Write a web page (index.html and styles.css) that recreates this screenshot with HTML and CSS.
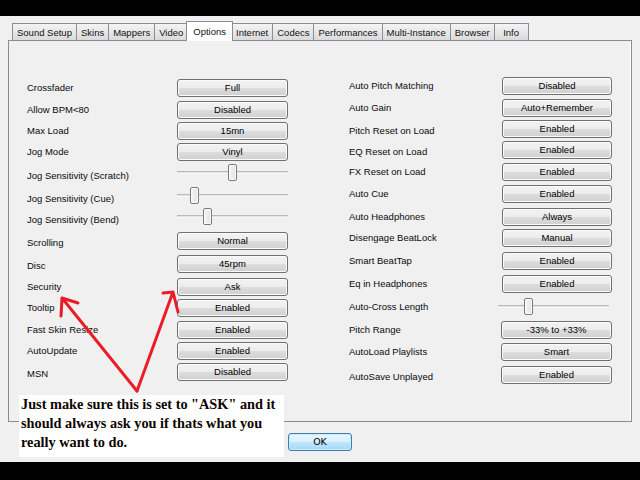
FILE: index.html
```html
<!DOCTYPE html>
<html>
<head>
<meta charset="utf-8">
<link rel="stylesheet" href="styles.css">
</head>
<body>
<div class="window">
  <div class="tabs">
    <div class="tab">Sound Setup</div>
    <div class="tab">Skins</div>
    <div class="tab">Mappers</div>
    <div class="tab">Video</div>
    <div class="tab active">Options</div>
    <div class="tab">Internet</div>
    <div class="tab">Codecs</div>
    <div class="tab">Performances</div>
    <div class="tab">Multi-Instance</div>
    <div class="tab">Browser</div>
    <div class="tab last">Info</div>
  </div>
  <div class="panel">
    <div class="col left">
      <div class="lbl">Crossfader</div><div class="btn">Full</div>
      <div class="lbl">Allow BPM&lt;80</div><div class="btn">Disabled</div>
      <div class="lbl">Max Load</div><div class="btn">15mn</div>
      <div class="lbl">Jog Mode</div><div class="btn">Vinyl</div>
      <div class="lbl slo">Jog Sensitivity (Scratch)</div><div class="slider"><div class="track"></div><div class="thumb" style="left:51px"></div></div>
      <div class="lbl slo">Jog Sensitivity (Cue)</div><div class="slider"><div class="track"></div><div class="thumb" style="left:13px"></div></div>
      <div class="lbl slo">Jog Sensitivity (Bend)</div><div class="slider"><div class="track"></div><div class="thumb" style="left:26px"></div></div>
      <div class="lbl lo">Scrolling</div><div class="btn">Normal</div>
      <div class="lbl lo">Disc</div><div class="btn">45rpm</div>
      <div class="lbl">Security</div><div class="btn">Ask</div>
      <div class="lbl">Tooltip</div><div class="btn">Enabled</div>
      <div class="lbl">Fast Skin Resize</div><div class="btn">Enabled</div>
      <div class="lbl">AutoUpdate</div><div class="btn">Enabled</div>
      <div class="lbl lo">MSN</div><div class="btn">Disabled</div>
    </div>
    <div class="col right">
      <div class="lbl">Auto Pitch Matching</div><div class="btn">Disabled</div>
      <div class="lbl">Auto Gain</div><div class="btn">Auto+Remember</div>
      <div class="lbl lo">Pitch Reset on Load</div><div class="btn">Enabled</div>
      <div class="lbl lo">EQ Reset on Load</div><div class="btn">Enabled</div>
      <div class="lbl">FX Reset on Load</div><div class="btn">Enabled</div>
      <div class="lbl">Auto Cue</div><div class="btn">Enabled</div>
      <div class="lbl">Auto Headphones</div><div class="btn">Always</div>
      <div class="lbl">Disengage BeatLock</div><div class="btn">Manual</div>
      <div class="lbl">Smart BeatTap</div><div class="btn">Enabled</div>
      <div class="lbl">Eq in Headphones</div><div class="btn">Enabled</div>
      <div class="lbl">Auto-Cross Length</div><div class="slider shift"><div class="track"></div><div class="thumb" style="left:26px"></div></div>
      <div class="lbl">Pitch Range</div><div class="btn shift1">-33% to +33%</div>
      <div class="lbl">AutoLoad Playlists</div><div class="btn shift1">Smart</div>
      <div class="lbl lo">AutoSave Unplayed</div><div class="btn shift1">Enabled</div>
    </div>
  </div>
  <div class="footer">
    <div class="okbtn">OK</div>
  </div>
</div>
<div class="note">Just make sure this is set to "ASK" and it<br>should always ask you if thats what you<br>really want to do.</div>
<svg class="arrows" width="640" height="480" viewBox="0 0 640 480">
  <g fill="none" stroke="#ea1c25" stroke-width="3" stroke-linecap="round" stroke-linejoin="round">
    <path d="M137 391 L62 298 M62 298 L78 303 M62 298 L61 316"/>
    <path d="M137 391 L173 292 M173 292 L163 293 M173 292 L178 312"/>
  </g>
</svg>
</body>
</html>
```

FILE: styles.css
```css
html, body {
  margin: 0;
  padding: 0;
}
body {
  width: 640px;
  height: 480px;
  background: #000;
  position: relative;
  overflow: hidden;
  font-family: "Liberation Sans", Arial, sans-serif;
  font-size: 9.5px;
  color: #000;
}
.window {
  margin-top: 16px;
  height: 446px;
  background: #f0f0f0;
}
.tabs {
  display: flex;
  align-items: flex-end;
  height: 24px;
  padding-left: 12px;
  box-sizing: border-box;
}
.tab {
  height: 17px;
  line-height: 18px;
  padding: 0 4px;
  box-sizing: border-box;
  border: 1px solid #8c8e94;
  border-bottom: none;
  margin-left: -1px;
  background: linear-gradient(#f4f4f4, #e6e6e6 55%, #dadada);
  text-align: center;
  white-space: nowrap;
  color: #111;
}
.tab:first-child {
  margin-left: 0;
}
.tab.last {
  min-width: 35px;
}
.tab.active {
  height: 20px;
  line-height: 19px;
  margin-bottom: -1px;
  background: #fff;
  position: relative;
  z-index: 2;
  padding: 0 6px;
  margin-left: -2px;
  margin-right: -1px;
}
.panel {
  margin-left: 8px;
  width: 624px;
  height: 382px;
  box-sizing: border-box;
  border: 1px solid #898c92;
  box-shadow: inset -1px 0 0 #fff;
  background: #f0f0f0;
  display: flex;
  align-items: flex-start;
  gap: 61px;
  padding: 36px 0 0 18px;
}
.col {
  display: grid;
  align-items: start;
}
.col.left {
  margin-top: 2px;
  grid-template-columns: 150px 111px;
  grid-template-rows: 22px 21px 21px 21px 23px 21px 24px 23px 23px 21px 22px 21px 21px 19px;
}
.col.right {
  grid-template-columns: 153px 110px;
  grid-template-rows: 22px 21px 21px 22px 22px 23px 21px 23px 23px 23px 23px 22px 23px 18px;
}
.lbl {
  height: 18px;
  line-height: 18px;
  white-space: nowrap;
  color: #0a0a0a;
}
.lbl.lo {
  padding-top: 2px;
}
.lbl.slo {
  padding-top: 3px;
}
.btn {
  height: 18px;
  box-sizing: border-box;
  border: 1px solid #707070;
  border-radius: 3px;
  background: linear-gradient(#f3f3f3 0%, #ececec 50%, #dddddd 50%, #d0d0d0 100%);
  box-shadow: inset 0 0 0 1px #fbfbfb;
  text-align: center;
  line-height: 16px;
  white-space: nowrap;
}
.btn.shift1 {
  margin-left: -1px;
}
.slider {
  position: relative;
  height: 17px;
  display: flex;
  align-items: center;
}
.slider.shift {
  margin-left: -4px;
  width: 111px;
}
.track {
  flex: 1;
  height: 3px;
  box-sizing: border-box;
  border-top: 1px solid #b9b9b9;
  border-bottom: 1px solid #f8f8f8;
  background: #e3e3e3;
}
.thumb {
  position: absolute;
  top: 0;
  width: 9px;
  height: 17px;
  box-sizing: border-box;
  border: 1px solid #7b7b7b;
  border-radius: 2px;
  background: linear-gradient(90deg, #f6f6f6, #e2e2e2);
  box-shadow: inset 0 0 0 1px #fcfcfc;
}
.footer {
  padding: 11px 0 0 288px;
}
.okbtn {
  width: 64px;
  height: 18px;
  box-sizing: border-box;
  border: 1px solid #3c7fb1;
  border-radius: 3px;
  background: linear-gradient(#eaf6fd 0%, #d9f0fc 50%, #bee6fd 50%, #a7d9f5 100%);
  box-shadow: inset 0 0 0 1px #c8ebfd;
  text-align: center;
  line-height: 16px;
  font-family: "DejaVu Sans", sans-serif;
  font-size: 9.5px;
}
.note {
  position: absolute;
  left: 19px;
  top: 395px;
  width: 265px;
  height: 62px;
  box-sizing: border-box;
  padding-left: 2px;
  background: #fff;
  font-family: "Liberation Serif", "Times New Roman", serif;
  font-weight: bold;
  font-size: 14.3px;
  line-height: 19px;
  white-space: nowrap;
  color: #0d0500;
}
.arrows {
  position: absolute;
  left: 0;
  top: 0;
  pointer-events: none;
}
```
